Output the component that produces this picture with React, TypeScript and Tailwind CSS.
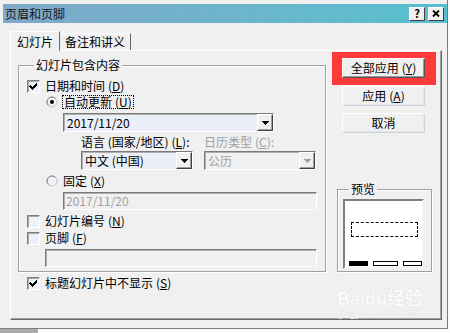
import React from "react";

function Mn({ k }: { k: string }) {
  return (
    <span className="ml-[3px]">
      (<u>{k}</u>)
    </span>
  );
}

function Check({ checked }: { checked?: boolean }) {
  return (
    <span className="w-[13px] h-[13px] shrink-0 flex items-center justify-center border border-t-[#808080] border-l-[#808080] border-r-[#ffffff] border-b-[#ffffff] bg-[#eef1f8] shadow-[inset_1px_1px_0_#a8a8a8]">
      {checked && (
        <svg width="9" height="9" viewBox="0 0 9 9" shapeRendering="crispEdges">
          <path d="M1 3h1v1h1v1h1v-1h1v-1h1v-1h1v-1h1v3h-1v1h-1v1h-1v1h-1v1h-1v-1h-1v-1h-1v-1h-1z" fill="#000" />
        </svg>
      )}
    </span>
  );
}

function Radio({ checked }: { checked?: boolean }) {
  return (
    <svg width="12" height="12" viewBox="0 0 12 12" className="shrink-0">
      <circle cx="6" cy="6" r="5" fill="#eef1f8" stroke="#c8c8c8" strokeWidth="1" />
      <path d="M2.46 9.54 A5 5 0 0 1 9.54 2.46" stroke="#808080" strokeWidth="1" fill="none" />
      {checked && <circle cx="6" cy="6" r="2" fill="#000" />}
    </svg>
  );
}

function Arrow({ disabled }: { disabled?: boolean }) {
  return (
    <span className="w-[16px] h-full shrink-0 flex items-center justify-center bg-[#f0f0f0] border border-t-[#ffffff] border-l-[#ffffff] border-r-[#404040] border-b-[#404040] shadow-[inset_-1px_-1px_0_#a0a0a0]">
      <svg width="7" height="4" viewBox="0 0 7 4" shapeRendering="crispEdges">
        <path d="M0 0h7l-3.5 4z" fill={disabled ? "#a0a0a0" : "#000"} />
      </svg>
    </span>
  );
}

const sunken =
  "border border-t-[#7a7a7a] border-l-[#7a7a7a] border-r-[#ffffff] border-b-[#ffffff] shadow-[inset_1px_1px_0_#b0b0b0]";

const btn =
  "w-[83px] h-[20px] flex items-center justify-center bg-[#f0f0f0] text-black border";

export default function App() {
  return (
    <div className="w-[450px] h-[333px] bg-[#fafafa] overflow-hidden relative font-['Noto_Sans_CJK_SC','Noto_Sans',sans-serif] text-[12px] leading-[14px] text-black">
      {/* window */}
      <div className="w-[448px] h-[329px] bg-[#f0f0f0] border-r border-b border-[#7c7c7c] pt-[4px] pl-[3px]">
        {/* title bar */}
        <div className="w-[444px] h-[19px] flex items-center bg-gradient-to-r from-[#80a8c9] to-[#55c0cd]">
          <span className="pl-[2px] text-[12px] text-[#151515]">页眉和页脚</span>
          <div className="ml-auto flex items-center gap-[3px] pr-[3px]">
            <span className="w-[16px] h-[14px] flex items-center justify-center bg-[#f0f0f0] border border-t-[#ffffff] border-l-[#ffffff] border-r-[#404040] border-b-[#404040] text-[11px] font-bold leading-none">
              ?
            </span>
            <span className="w-[16px] h-[14px] flex items-center justify-center bg-[#f0f0f0] border border-t-[#ffffff] border-l-[#ffffff] border-r-[#404040] border-b-[#404040]">
              <svg width="8" height="7" viewBox="0 0 8 7">
                <path d="M1 0.5 L7 6.5 M7 0.5 L1 6.5" stroke="#000" strokeWidth="1.8" />
              </svg>
            </span>
          </div>
        </div>

        {/* tabs */}
        <div className="mt-[8px] ml-[7px] h-[19px] flex items-end">
          <div className="relative z-10 w-[50px] h-[20px] -mb-[1px] flex items-center justify-center bg-[#f0f0f0] border-t border-l border-r border-t-[#ffffff] border-l-[#ffffff] border-r-[#696969]">
            幻灯片
          </div>
          <div className="w-[71px] h-[17px] flex items-center justify-center border-t border-r border-t-[#ffffff] border-r-[#696969]">
            备注和讲义
          </div>
        </div>

        {/* tab panel */}
        <div className="ml-[7px] w-[432px] h-[270px] border border-t-[#ffffff] border-l-[#ffffff] border-r-[#696969] border-b-[#696969] shadow-[inset_-1px_-1px_0_#a0a0a0] flex items-start pl-[7px]">
          {/* left column */}
          <div className="w-[308px] mt-[7px] flex flex-col">
            <fieldset className="w-[308px] border border-[#a0a0a0] shadow-[inset_1px_1px_0_#ffffff,1px_1px_0_#ffffff] pl-[8px] pb-[4px]">
              <legend className="ml-[7px] px-[2px] leading-[14px]">幻灯片包含内容</legend>

              <div className="mt-[7px] h-[14px] flex items-center gap-[5px]">
                <Check checked />
                <span>
                  日期和时间<Mn k="D" />
                </span>
              </div>

              <div className="mt-[2px] h-[14px] flex items-center ml-[19px]">
                <Radio checked />
                <span className="ml-[4px] px-[1px] border border-dotted border-black h-[14px] flex items-center">
                  自动更新<Mn k="U" />
                </span>
              </div>

              <div className={`mt-[4px] ml-[36px] w-[211px] h-[19px] flex items-center bg-[#e9eef7] ${sunken}`}>
                <span className="flex-1 pl-[3px]">2017/11/20</span>
                <Arrow />
              </div>

              <div className="mt-[3px] ml-[54px] h-[14px] flex items-center">
                <span className="w-[123px]">
                  语言 (国家/地区)<Mn k="L" />:
                </span>
                <span className="text-[#a0a0a0]">
                  日历类型<Mn k="C" />:
                </span>
              </div>

              <div className="mt-[2px] ml-[54px] h-[19px] flex items-center gap-[11px]">
                <div className={`w-[112px] h-[19px] flex items-center bg-[#e9eef7] ${sunken}`}>
                  <span className="flex-1 pl-[3px]">中文 (中国)</span>
                  <Arrow />
                </div>
                <div className={`w-[112px] h-[19px] flex items-center bg-[#f0f0f0] text-[#a0a0a0] ${sunken}`}>
                  <span className="flex-1 pl-[3px]">公历</span>
                  <Arrow disabled />
                </div>
              </div>

              <div className="mt-[4px] h-[14px] flex items-center ml-[19px]">
                <Radio />
                <span className="ml-[5px]">
                  固定<Mn k="X" />
                </span>
              </div>

              <div className={`mt-[4px] ml-[36px] w-[254px] h-[18px] flex items-center text-[#a0a0a0] bg-[#f0f0f0] ${sunken}`}>
                <span className="pl-[2px]">2017/11/20</span>
              </div>

              <div className="mt-[4px] h-[14px] flex items-center gap-[5px]">
                <Check />
                <span>
                  幻灯片编号<Mn k="N" />
                </span>
              </div>

              <div className="mt-[3px] h-[14px] flex items-center gap-[5px]">
                <Check />
                <span>
                  页脚<Mn k="F" />
                </span>
              </div>

              <div className={`mt-[4px] ml-[18px] w-[272px] h-[18px] bg-[#f0f0f0] ${sunken}`} />
            </fieldset>

            <div className="mt-[4px] ml-[9px] h-[14px] flex items-center gap-[5px]">
              <Check checked />
              <span>
                标题幻灯片中不显示<Mn k="S" />
              </span>
            </div>
          </div>

          {/* right column */}
          <div className="ml-[6px] mt-[1px] flex flex-col">
            <div className="w-[104px] border-t-[6px] border-b-[7px] border-l-[10px] border-r-[11px] border-[#ff3a3a]">
              <div className={`${btn} border-t-[#ffffff] border-l-[#ffffff] border-r-[#555555] border-b-[#555555] shadow-[inset_-1px_-1px_0_#9a9a9a]`}>
                全部应用<Mn k="Y" />
              </div>
            </div>
            <div className={`${btn} ml-[10px] mt-[1px] border-t-[#ffffff] border-l-[#ffffff] border-r-[#cdd3dc] border-b-[#cdd3dc] shadow-[inset_-1px_-1px_0_#e2e7ee]`}>
              应用<Mn k="A" />
            </div>
            <div className={`${btn} ml-[10px] mt-[7px] border-t-[#ffffff] border-l-[#ffffff] border-r-[#cdd3dc] border-b-[#cdd3dc] shadow-[inset_-1px_-1px_0_#e2e7ee]`}>
              取消
            </div>

            <fieldset className="ml-[5px] mt-[50px] w-[95px] border border-[#a0a0a0] shadow-[inset_1px_1px_0_#ffffff,1px_1px_0_#ffffff] px-[5px] pb-[2px]">
              <legend className="ml-[6px] px-[2px] leading-[12px]">预览</legend>
              <div className="mt-[4px] w-[81px] h-[70px] bg-white border-2 border-t-[#808080] border-l-[#808080] border-r-[#f4f4f4] border-b-[#f4f4f4] flex flex-col">
                <div className="mt-[21px] ml-[6px] w-[67px] h-[15px] border border-dashed border-black" />
                <div className="mt-auto mb-[1px] ml-[4px] flex items-center h-[5px]">
                  <div className="w-[19px] h-[5px] bg-black" />
                  <div className="ml-[5px] w-[25px] h-[5px] border border-black" />
                  <div className="ml-[5px] w-[19px] h-[5px] border border-black" />
                </div>
              </div>
            </fieldset>
          </div>
        </div>
      </div>
      <div className="w-[38px] h-[4px] bg-[#ababab]" />

      {/* watermark */}
      <div className="absolute left-[337px] top-[290px] flex flex-col items-center text-[#fbfbfb] [text-shadow:0_0_1px_#d0d0d0] pointer-events-none">
        <span className="text-[18px] leading-[18px] font-bold font-['Liberation_Sans','Noto_Sans_CJK_SC',sans-serif]">Baidu经验</span>
        <span className="text-[10px] leading-[12px] font-['Liberation_Sans',sans-serif]">jingyan.baidu.com</span>
      </div>
    </div>
  );
}
